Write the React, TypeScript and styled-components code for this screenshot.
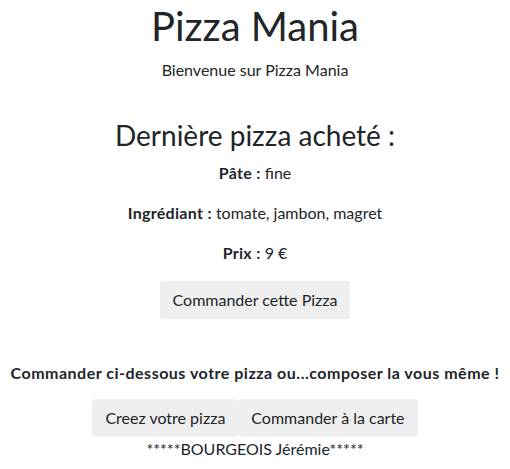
import React from "react";
import styled, { createGlobalStyle } from "styled-components";

const Global = createGlobalStyle`
  html, body { margin: 0; padding: 0; background: #fff; }
  body {
    font-family: Lato, "Open Sans", sans-serif;
    color: #212529;
    font-size: 16px;
    line-height: 1.5;
  }
`;

const Page = styled.main`
  display: flex;
  flex-direction: column;
  align-items: center;
  text-align: center;
  padding-top: 2px;
`;

const Title = styled.h1`
  margin: 0 0 6px;
  font-size: 40px;
  font-weight: 400;
  line-height: 1.2;
`;

const Subtitle = styled.p`
  margin: 2px 0 0;
`;

const SectionTitle = styled.h2`
  margin: 37px 0 8px;
  font-size: 28px;
  font-weight: 400;
  line-height: 1.2;
`;

const Detail = styled.p`
  margin: 0 0 16px;
`;

const Label = styled.strong`
  font-weight: 700;
  letter-spacing: 0.3px;
`;

const Button = styled.button`
  font-family: inherit;
  font-size: 16px;
  line-height: 24px;
  color: #212529;
  background: #efefef;
  border: 1px solid transparent;
  border-radius: 4px;
  padding: 6px 12px;
  cursor: pointer;
`;

const Callout = styled.p`
  margin: 42px 0 14px;
  font-weight: 700;
  letter-spacing: 0.5px;
  white-space: nowrap;
`;

const ButtonRow = styled.div`
  display: flex;
  justify-content: center;
`;

const Footer = styled.p`
  margin: 0;
`;

export default function App() {
  return (
    <>
      <Global />
      <Page>
        <Title>Pizza Mania</Title>
        <Subtitle>Bienvenue sur Pizza Mania</Subtitle>
        <SectionTitle>Dernière pizza acheté :</SectionTitle>
        <Detail>
          <Label>Pâte :</Label> fine
        </Detail>
        <Detail>
          <Label>Ingrédiant :</Label> tomate, jambon, magret
        </Detail>
        <Detail>
          <Label>Prix :</Label> 9 €
        </Detail>
        <Button>Commander cette Pizza</Button>
        <Callout>Commander ci-dessous votre pizza ou...composer la vous même !</Callout>
        <ButtonRow>
          <Button>Creez votre pizza</Button>
          <Button>Commander à la carte</Button>
        </ButtonRow>
        <Footer>*****BOURGEOIS Jérémie*****</Footer>
      </Page>
    </>
  );
}
